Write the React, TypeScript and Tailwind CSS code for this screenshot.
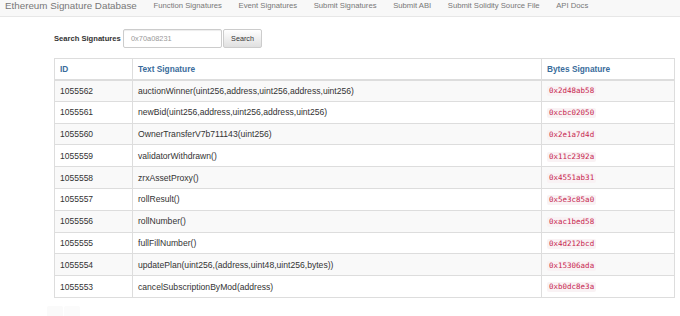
const navLinks = [
  'Function Signatures',
  'Event Signatures',
  'Submit Signatures',
  'Submit ABI',
  'Submit Solidity Source File',
  'API Docs',
];

const rows = [
  { id: '1055562', text: 'auctionWinner(uint256,address,uint256,address,uint256)', hex: '0x2d48ab58' },
  { id: '1055561', text: 'newBid(uint256,address,uint256,address,uint256)', hex: '0xcbc02050' },
  { id: '1055560', text: 'OwnerTransferV7b711143(uint256)', hex: '0x2e1a7d4d' },
  { id: '1055559', text: 'validatorWithdrawn()', hex: '0x11c2392a' },
  { id: '1055558', text: 'zrxAssetProxy()', hex: '0x4551ab31' },
  { id: '1055557', text: 'rollResult()', hex: '0x5e3c85a0' },
  { id: '1055556', text: 'rollNumber()', hex: '0xac1bed58' },
  { id: '1055555', text: 'fullFillNumber()', hex: '0x4d212bcd' },
  { id: '1055554', text: 'updatePlan(uint256,(address,uint48,uint256,bytes))', hex: '0x15306ada' },
  { id: '1055553', text: 'cancelSubscriptionByMod(address)', hex: '0xb0dc8e3a' },
];

export default function App() {
  return (
    <div className="h-[316px] w-[680px] overflow-hidden bg-white font-['Liberation_Sans',Arial,sans-serif] text-[8.6px] leading-[12px] text-[#333]">
      {/* navbar, top part scrolled off */}
      <nav className="flex h-[17px] items-start border-b border-[#e7e7e7] bg-[#f8f8f8]">
        <span className="pl-[5px] pr-[8.5px] text-[9.8px] leading-[11px] text-[#777]">
          Ethereum Signature Database
        </span>
        {navLinks.map((l) => (
          <span key={l} className="px-[8.3px] pt-[1px] text-[7.7px] leading-[10px] text-[#777]">
            {l}
          </span>
        ))}
      </nav>

      <main className="pl-[54px] pr-[6px]">
        <div className="mt-[12px] flex h-[19px] items-center">
          <label className="mr-[1px] w-[68px] text-[7.6px] font-bold text-[#333]">Search Signatures</label>
          <div className="flex h-[19px] w-[99px] items-center rounded-[2px] border border-[#ccc] bg-white pl-[7px] text-[7.4px] text-[#999] shadow-[inset_0_1px_1px_rgba(0,0,0,0.075)]">
            0x70a08231
          </div>
          <button className="ml-[1px] flex h-[19px] w-[39px] items-center justify-center rounded-[2px] border border-[#ccc] bg-gradient-to-b from-white to-[#e0e0e0] text-[7.2px] text-[#333]">
            Search
          </button>
        </div>

        <table className="mt-[10px] w-[620px] table-fixed border-collapse border border-[#ddd]">
          <colgroup>
            <col className="w-[78px]" />
            <col className="w-[409px]" />
            <col className="w-[133px]" />
          </colgroup>
          <thead>
            <tr className="h-[21px] border-b-2 border-[#ddd]">
              <th className="border-r border-[#ddd] px-[5px] py-0 text-left text-[8.3px] font-bold text-[#3a6c9b]">ID</th>
              <th className="border-r border-[#ddd] px-[5px] py-0 text-left text-[8.3px] font-bold text-[#3a6c9b]">Text Signature</th>
              <th className="px-[5px] py-0 text-left text-[8.3px] font-bold text-[#3a6c9b]">Bytes Signature</th>
            </tr>
          </thead>
          <tbody>
            {rows.map((r, i) => (
              <tr key={r.id} className={`h-[21.8px] border-t border-[#ddd] ${i % 2 === 0 ? 'bg-[#f9f9f9]' : 'bg-white'}`}>
                <td className="border-r border-[#ddd] px-[5px] py-0 text-[8.5px]">{r.id}</td>
                <td className="border-r border-[#ddd] px-[5px] py-0">{r.text}</td>
                <td className="px-[5px] py-0">
                  <code className="inline-block rounded-[2px] bg-[#f9f2f4] px-[2px] align-middle font-['DejaVu_Sans_Mono',monospace] text-[7.5px] leading-[10px] text-[#c7254e]">
                    {r.hex}
                  </code>
                </td>
              </tr>
            ))}
          </tbody>
        </table>

        {/* pagination, cut off at the bottom */}
        <div className="ml-[-7px] mt-[8px] flex gap-[1px]">
          <div className="h-[14px] w-[16px] rounded-[2px] bg-[#fafafa]" />
          <div className="h-[14px] w-[16px] rounded-[2px] bg-[#fbfbfb]" />
        </div>
      </main>
    </div>
  );
}
